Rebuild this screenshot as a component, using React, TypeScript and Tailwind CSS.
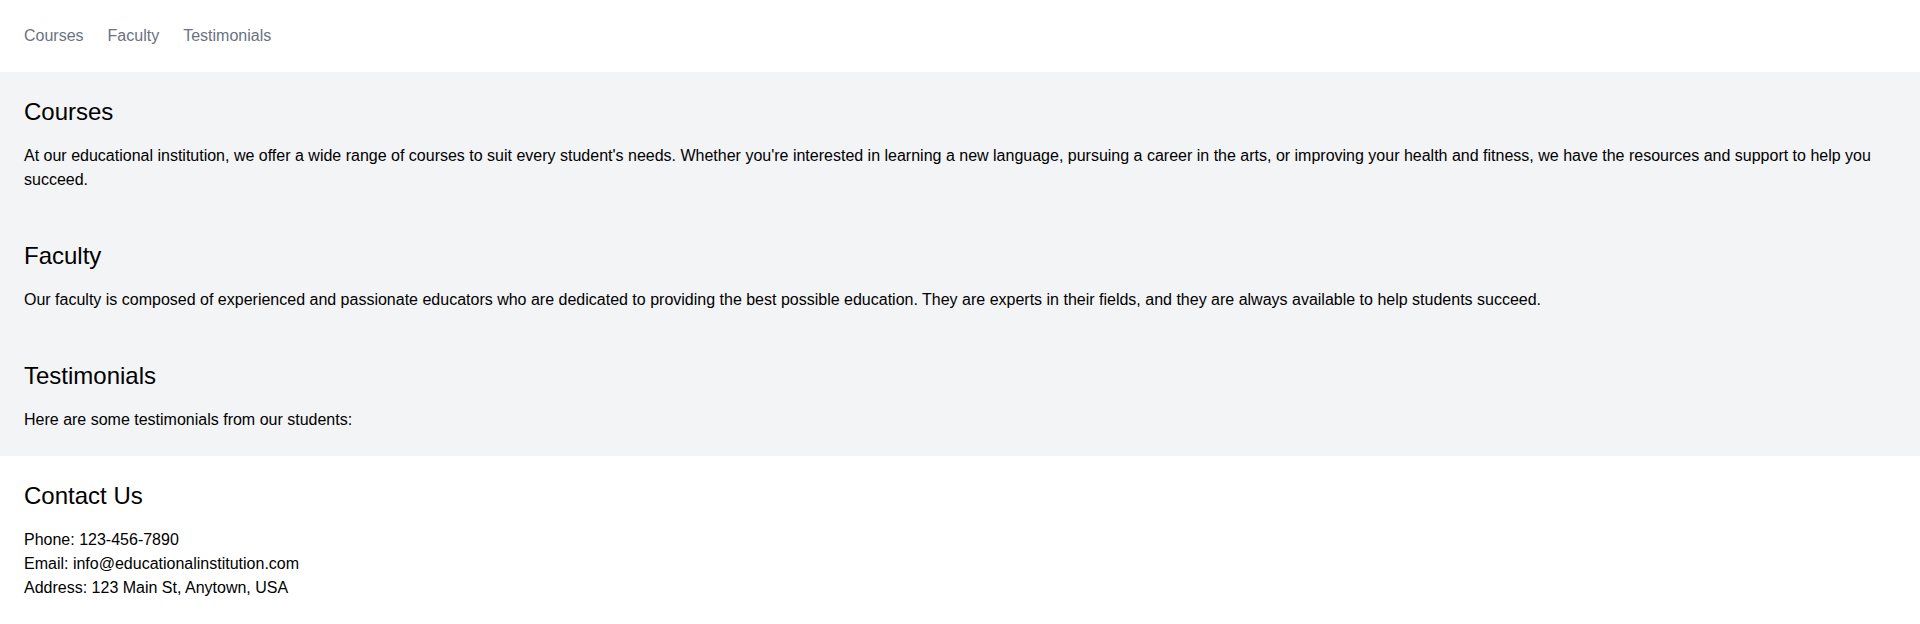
const navLinks = [
  { label: "Courses", href: "#courses" },
  { label: "Faculty", href: "#faculty" },
  { label: "Testimonials", href: "#testimonials" },
]

const sections = [
  {
    id: "courses",
    title: "Courses",
    body: "At our educational institution, we offer a wide range of courses to suit every student's needs. Whether you're interested in learning a new language, pursuing a career in the arts, or improving your health and fitness, we have the resources and support to help you succeed.",
  },
  {
    id: "faculty",
    title: "Faculty",
    body: "Our faculty is composed of experienced and passionate educators who are dedicated to providing the best possible education. They are experts in their fields, and they are always available to help students succeed.",
  },
  {
    id: "testimonials",
    title: "Testimonials",
    body: "Here are some testimonials from our students:",
  },
]

export default function App() {
  return (
    <div className="min-h-screen bg-white text-black font-['Liberation_Sans',Arial,sans-serif]">
      {/* Nav */}
      <nav className="px-6 py-6">
        <ul className="flex gap-6 text-base leading-6 text-gray-500">
          {navLinks.map((link) => (
            <li key={link.label}>
              <a href={link.href}>{link.label}</a>
            </li>
          ))}
        </ul>
      </nav>

      {/* Main content */}
      <main className="bg-gray-100">
        {sections.map((section) => (
          <section key={section.id} id={section.id} className="px-6 py-6">
            <h2 className="text-2xl leading-8 mb-4">{section.title}</h2>
            <p className="text-base leading-6">{section.body}</p>
          </section>
        ))}
      </main>

      {/* Contact */}
      <footer className="px-6 py-6">
        <h2 className="text-2xl leading-8 mb-4">Contact Us</h2>
        <p className="text-base leading-6">Phone: 123-456-7890</p>
        <p className="text-base leading-6">Email: info@educationalinstitution.com</p>
        <p className="text-base leading-6">Address: 123 Main St, Anytown, USA</p>
      </footer>
    </div>
  )
}
